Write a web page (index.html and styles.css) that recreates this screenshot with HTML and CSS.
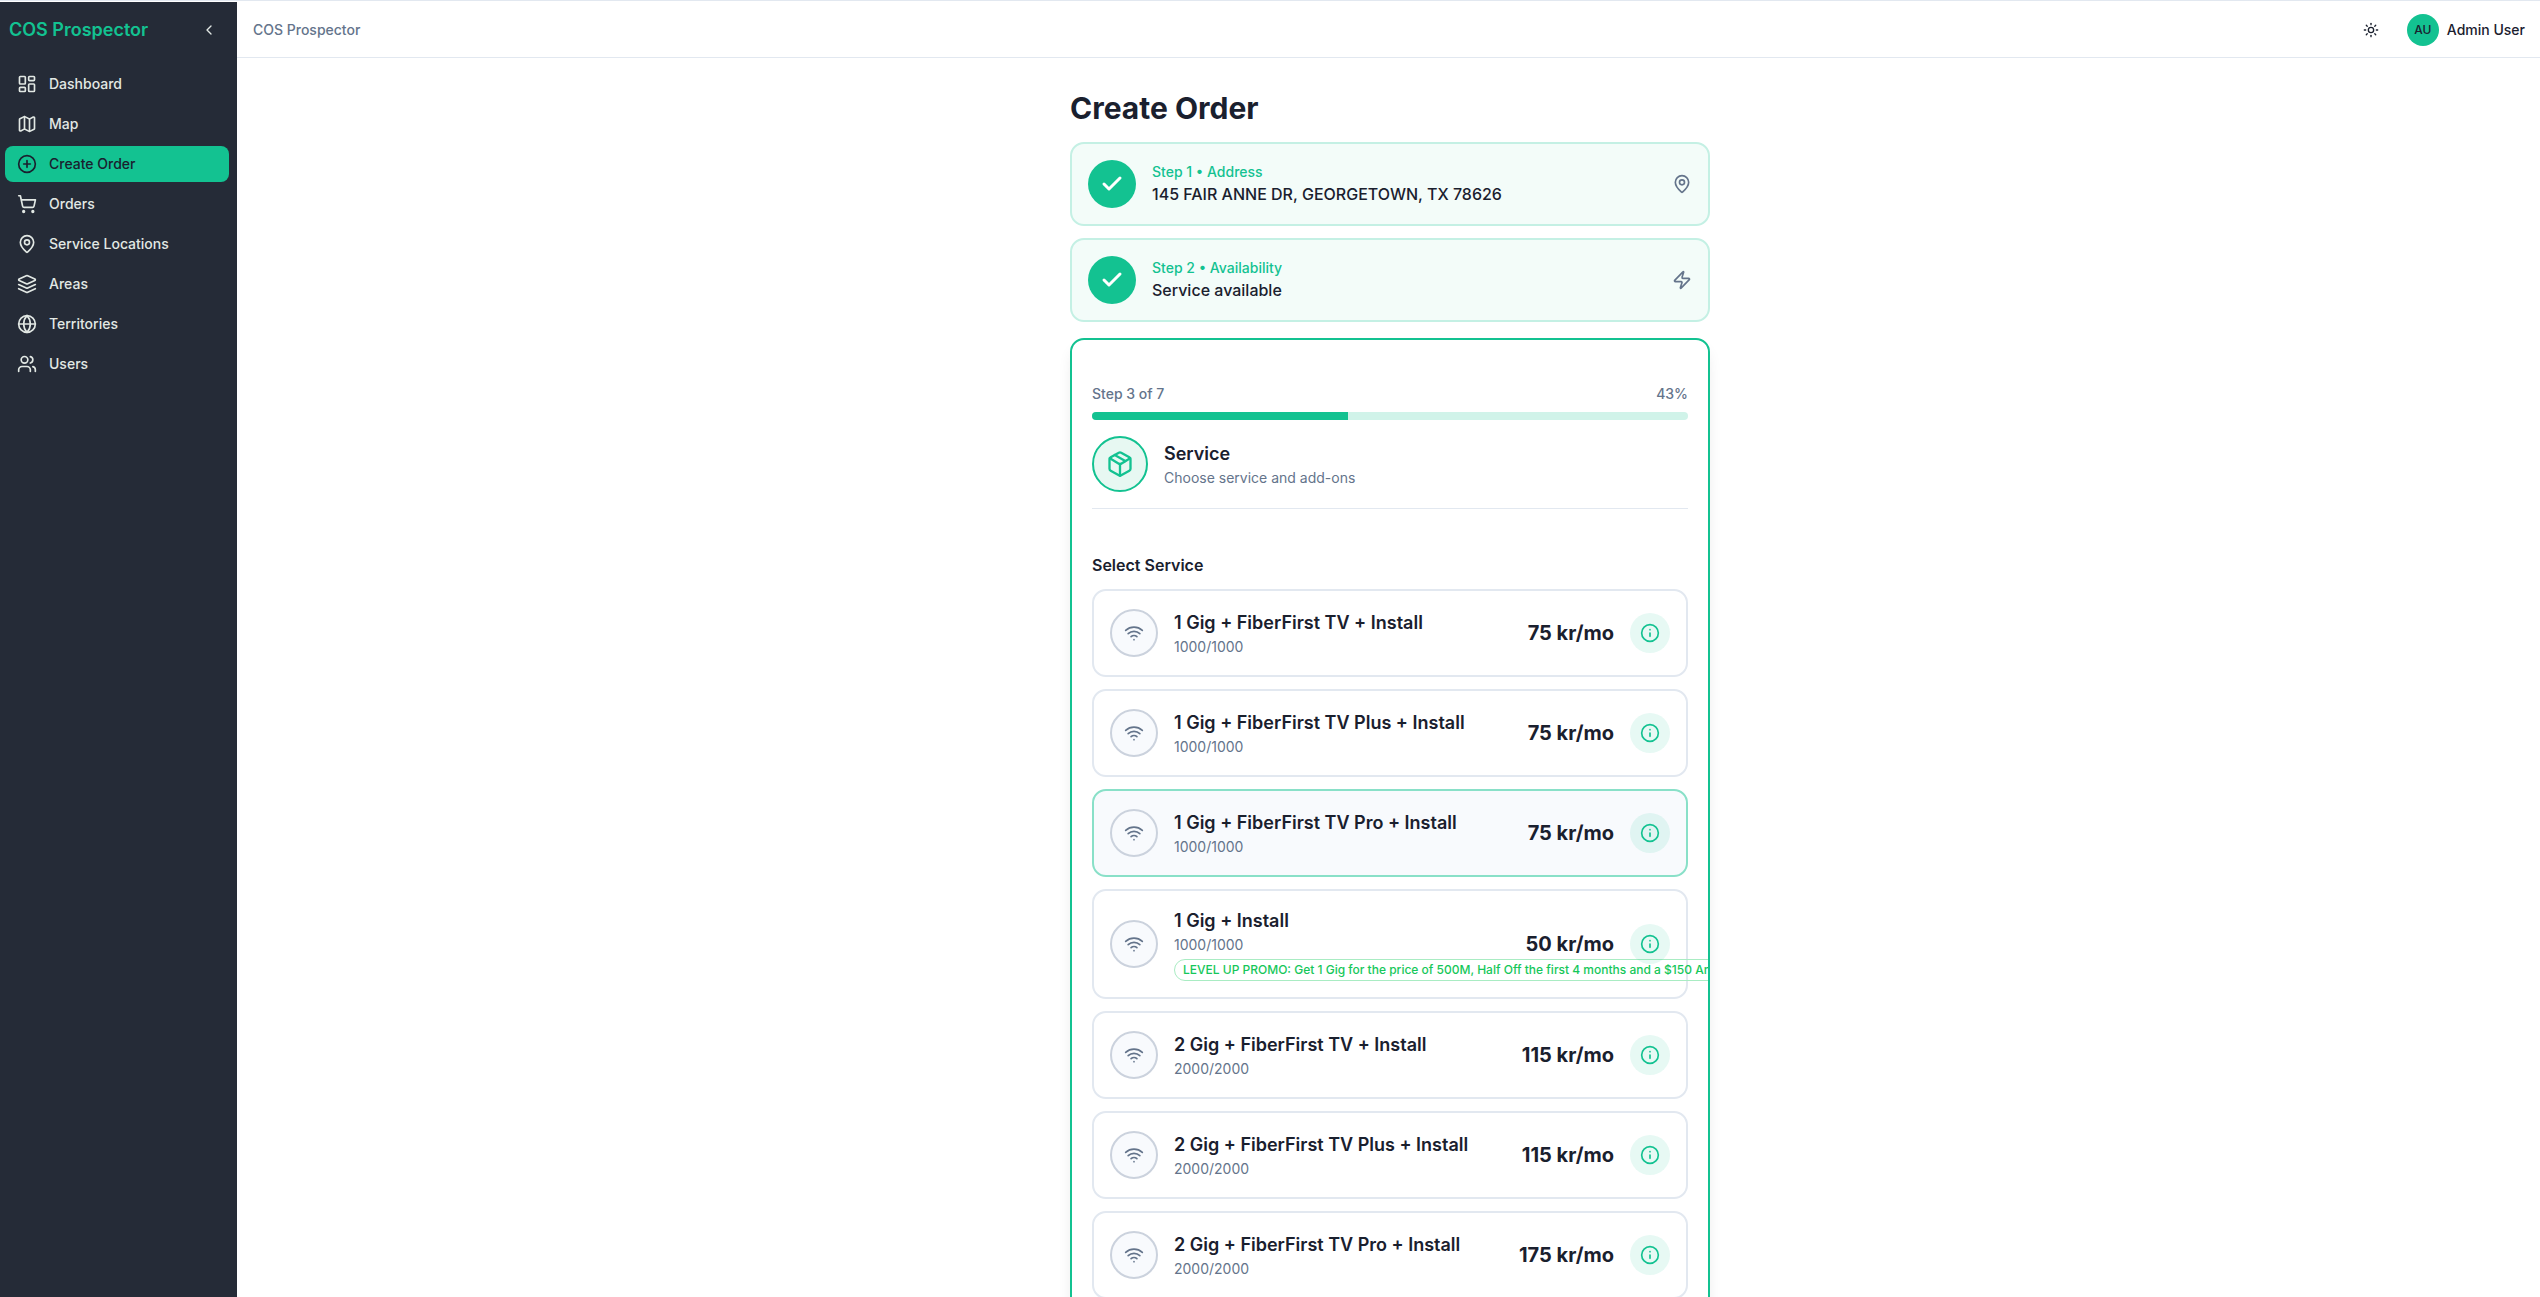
FILE: index.html
```
<!DOCTYPE html>
<html lang="en">
<head>
<meta charset="utf-8">
<meta name="viewport" content="width=device-width, initial-scale=1">
<title>COS Prospector - Create Order</title>
<link rel="stylesheet" href="styles.css">
</head>
<body>
<svg class="sprite" aria-hidden="true">
  <symbol id="wifi" viewBox="0 0 24 24"><path d="M12 20h.01"/><path d="M2 8.82a15 15 0 0 1 20 0"/><path d="M5 12.859a10 10 0 0 1 14 0"/><path d="M8.5 16.429a5 5 0 0 1 7 0"/></symbol>
  <symbol id="info" viewBox="0 0 24 24"><circle cx="12" cy="12" r="10"/><path d="M12 16v-4"/><path d="M12 8h.01"/></symbol>
  <symbol id="check" viewBox="0 0 24 24"><path d="M20 6 9 17l-5-5"/></symbol>
  <symbol id="pin" viewBox="0 0 24 24"><path d="M20 10c0 4.993-5.539 10.193-7.399 11.799a1 1 0 0 1-1.202 0C9.539 20.193 4 14.993 4 10a8 8 0 0 1 16 0"/><circle cx="12" cy="10" r="3"/></symbol>
</svg>
<div class="app">
  <aside class="sidebar">
    <div class="brand">
      <span class="brand-name">COS Prospector</span>
      <button class="icon-button" type="button" aria-label="Collapse sidebar"><svg class="icon icon-sm" viewBox="0 0 24 24"><path d="m15 18-6-6 6-6"/></svg></button>
    </div>
    <nav class="nav">
      <a class="nav-link" href="#dashboard"><svg class="icon" viewBox="0 0 24 24"><rect width="7" height="9" x="3" y="3" rx="1"/><rect width="7" height="5" x="14" y="3" rx="1"/><rect width="7" height="9" x="14" y="12" rx="1"/><rect width="7" height="5" x="3" y="16" rx="1"/></svg>Dashboard</a>
      <a class="nav-link" href="#map"><svg class="icon" viewBox="0 0 24 24"><path d="M14.106 5.553a2 2 0 0 0 1.788 0l3.659-1.83A1 1 0 0 1 21 4.619v12.764a1 1 0 0 1-.553.894l-4.553 2.277a2 2 0 0 1-1.788 0l-4.212-2.106a2 2 0 0 0-1.788 0l-3.659 1.83A1 1 0 0 1 3 19.381V6.618a1 1 0 0 1 .553-.894l4.553-2.277a2 2 0 0 1 1.788 0z"/><path d="M15 5.764v15"/><path d="M9 3.236v15"/></svg>Map</a>
      <a class="nav-link active" href="#create" aria-current="page"><svg class="icon" viewBox="0 0 24 24"><circle cx="12" cy="12" r="10"/><path d="M8 12h8"/><path d="M12 8v8"/></svg>Create Order</a>
      <a class="nav-link" href="#orders"><svg class="icon" viewBox="0 0 24 24"><circle cx="8" cy="21" r="1"/><circle cx="19" cy="21" r="1"/><path d="M2.05 2.05h2l2.66 12.42a2 2 0 0 0 2 1.58h9.78a2 2 0 0 0 1.95-1.57l1.65-7.43H5.12"/></svg>Orders</a>
      <a class="nav-link" href="#locations"><svg class="icon"><use href="#pin"/></svg>Service Locations</a>
      <a class="nav-link" href="#areas"><svg class="icon" viewBox="0 0 24 24"><path d="m12.83 2.18a2 2 0 0 0-1.66 0L2.6 6.08a1 1 0 0 0 0 1.83l8.58 3.91a2 2 0 0 0 1.66 0l8.58-3.9a1 1 0 0 0 0-1.83Z"/><path d="m22 17.65-9.17 4.16a2 2 0 0 1-1.66 0L2 17.65"/><path d="m22 12.65-9.17 4.16a2 2 0 0 1-1.66 0L2 12.65"/></svg>Areas</a>
      <a class="nav-link" href="#territories"><svg class="icon" viewBox="0 0 24 24"><circle cx="12" cy="12" r="10"/><path d="M12 2a14.5 14.5 0 0 0 0 20 14.5 14.5 0 0 0 0-20"/><path d="M2 12h20"/></svg>Territories</a>
      <a class="nav-link" href="#users"><svg class="icon" viewBox="0 0 24 24"><path d="M16 21v-2a4 4 0 0 0-4-4H6a4 4 0 0 0-4 4v2"/><circle cx="9" cy="7" r="4"/><path d="M22 21v-2a4 4 0 0 0-3-3.87"/><path d="M16 3.13a4 4 0 0 1 0 7.75"/></svg>Users</a>
    </nav>
  </aside>
  <div class="page">
    <header class="topbar">
      <a class="crumb" href="#home">COS Prospector</a>
      <div class="topbar-actions">
        <button class="icon-button" type="button" aria-label="Toggle theme"><svg class="icon icon-sm" viewBox="0 0 24 24"><circle cx="12" cy="12" r="4"/><path d="M12 2v2"/><path d="M12 20v2"/><path d="m4.93 4.93 1.41 1.41"/><path d="m17.66 17.66 1.41 1.41"/><path d="M2 12h2"/><path d="M20 12h2"/><path d="m6.34 17.66-1.41 1.41"/><path d="m19.07 4.93-1.41 1.41"/></svg></button>
        <button class="account" type="button"><span class="avatar">AU</span>Admin User</button>
      </div>
    </header>
    <main class="content">
      <div class="order">
        <h1>Create Order</h1>
        <div class="done-steps">
          <section class="done">
            <span class="done-mark"><svg class="icon icon-md"><use href="#check"/></svg></span>
            <div class="grow"><p class="done-label">Step 1 • Address</p><p class="done-value">145 FAIR ANNE DR, GEORGETOWN, TX 78626</p></div>
            <svg class="icon muted"><use href="#pin"/></svg>
          </section>
          <section class="done">
            <span class="done-mark"><svg class="icon icon-md"><use href="#check"/></svg></span>
            <div class="grow"><p class="done-label">Step 2 • Availability</p><p class="done-value">Service available</p></div>
            <svg class="icon muted" viewBox="0 0 24 24"><path d="M4 14a1 1 0 0 1-.78-1.63l9.9-10.2a.5.5 0 0 1 .86.46l-1.92 6.02A1 1 0 0 0 13 10h7a1 1 0 0 1 .78 1.63l-9.9 10.2a.5.5 0 0 1-.86-.46l1.92-6.02A1 1 0 0 0 11 14z"/></svg>
          </section>
        </div>
        <section class="current">
          <div class="step-head">
            <div class="progress-text"><span>Step 3 of 7</span><span>43%</span></div>
            <div class="progress" role="progressbar" aria-label="Order progress" aria-valuenow="43" aria-valuemin="0" aria-valuemax="100"><div class="progress-fill" style="width:43%"></div></div>
            <div class="step-title">
              <span class="step-icon"><svg class="icon icon-lg" viewBox="0 0 24 24"><path d="M11 21.73a2 2 0 0 0 2 0l7-4A2 2 0 0 0 21 16V8a2 2 0 0 0-1-1.73l-7-4a2 2 0 0 0-2 0l-7 4A2 2 0 0 0 3 8v8a2 2 0 0 0 1 1.73z"/><path d="M12 22V12"/><path d="m3.3 7 7.703 4.734a2 2 0 0 0 1.994 0L20.7 7"/><path d="m7.5 4.27 9 5.15"/></svg></span>
              <div><h2>Service</h2><p class="sub">Choose service and add-ons</p></div>
            </div>
          </div>
          <h3>Select Service</h3>
          <ul class="options">
            <li class="option"><span class="option-icon"><svg class="icon"><use href="#wifi"/></svg></span><div class="grow"><p class="name">1 Gig + FiberFirst TV + Install</p><p class="sub">1000/1000</p></div><span class="price">75 kr/mo</span><button class="info" type="button" aria-label="Details"><svg class="icon"><use href="#info"/></svg></button></li>
            <li class="option"><span class="option-icon"><svg class="icon"><use href="#wifi"/></svg></span><div class="grow"><p class="name">1 Gig + FiberFirst TV Plus + Install</p><p class="sub">1000/1000</p></div><span class="price">75 kr/mo</span><button class="info" type="button" aria-label="Details"><svg class="icon"><use href="#info"/></svg></button></li>
            <li class="option hovered"><span class="option-icon"><svg class="icon"><use href="#wifi"/></svg></span><div class="grow"><p class="name">1 Gig + FiberFirst TV Pro + Install</p><p class="sub">1000/1000</p></div><span class="price">75 kr/mo</span><button class="info" type="button" aria-label="Details"><svg class="icon"><use href="#info"/></svg></button></li>
            <li class="option"><span class="option-icon"><svg class="icon"><use href="#wifi"/></svg></span><div class="grow"><p class="name">1 Gig + Install</p><p class="sub">1000/1000</p><span class="promo">LEVEL UP PROMO: Get 1 Gig for the price of 500M, Half Off the first 4 months and a $150 Amazon</span></div><span class="price">50 kr/mo</span><button class="info" type="button" aria-label="Details"><svg class="icon"><use href="#info"/></svg></button></li>
            <li class="option"><span class="option-icon"><svg class="icon"><use href="#wifi"/></svg></span><div class="grow"><p class="name">2 Gig + FiberFirst TV + Install</p><p class="sub">2000/2000</p></div><span class="price">115 kr/mo</span><button class="info" type="button" aria-label="Details"><svg class="icon"><use href="#info"/></svg></button></li>
            <li class="option"><span class="option-icon"><svg class="icon"><use href="#wifi"/></svg></span><div class="grow"><p class="name">2 Gig + FiberFirst TV Plus + Install</p><p class="sub">2000/2000</p></div><span class="price">115 kr/mo</span><button class="info" type="button" aria-label="Details"><svg class="icon"><use href="#info"/></svg></button></li>
            <li class="option"><span class="option-icon"><svg class="icon"><use href="#wifi"/></svg></span><div class="grow"><p class="name">2 Gig + FiberFirst TV Pro + Install</p><p class="sub">2000/2000</p></div><span class="price">175 kr/mo</span><button class="info" type="button" aria-label="Details"><svg class="icon"><use href="#info"/></svg></button></li>
          </ul>
        </section>
      </div>
    </main>
  </div>
</div>
</body>
</html>
```
FILE: styles.css
```
:root {
  --green: #13c291;
  --ink: #1a202e;
  --muted: #64748b;
  --line: #e2e8f0;
  --dark: #252b37;
  --radius: 14px;
}
* { box-sizing: border-box; }
body {
  margin: 0;
  background: #fff;
  color: var(--ink);
  font: 500 14px/20px Inter, sans-serif;
}
h1, h2, h3, p, ul { margin: 0; padding: 0; }
button { padding: 0; border: 0; background: none; color: inherit; font: inherit; cursor: pointer; }
a { color: inherit; text-decoration: none; }
.sprite { position: absolute; width: 0; height: 0; }
.icon {
  flex: none;
  width: 20px;
  height: 20px;
  fill: none;
  stroke: currentColor;
  stroke-width: 2;
  stroke-linecap: round;
  stroke-linejoin: round;
}
.icon-sm { width: 16px; height: 16px; }
.icon-md { width: 24px; height: 24px; stroke-width: 3; }
.icon-lg { width: 28px; height: 28px; }
.muted { color: var(--muted); }
.grow { flex: 1; min-width: 0; }

.app {
  display: flex;
  height: 100vh;
  overflow: hidden;
  padding-top: 1px;
  border-top: 1px solid var(--line);
}
.sidebar { flex: none; width: 237px; background: var(--dark); color: #e2e8e4; }
.brand { display: flex; align-items: center; justify-content: space-between; height: 56px; padding: 0 16px 0 9px; }
.brand-name { color: var(--green); font-size: 18px; line-height: 28px; font-weight: 600; }
.icon-button { display: grid; place-items: center; width: 24px; height: 32px; }
.nav { display: flex; flex-direction: column; gap: 4px; padding: 8px 8px 8px 5px; }
.nav-link { display: flex; align-items: center; gap: 12px; height: 36px; padding: 0 12px; border-radius: 8px; }
.nav-link.active { background: var(--green); color: var(--ink); }

.page { flex: 1; min-width: 0; display: flex; flex-direction: column; }
.topbar {
  flex: none;
  display: flex;
  align-items: center;
  justify-content: space-between;
  height: 56px;
  padding: 0 15px 0 16px;
  border-bottom: 1px solid var(--line);
}
.crumb { color: var(--muted); }
.topbar-actions { display: flex; align-items: center; gap: 24px; }
.account { display: flex; align-items: center; gap: 8px; }
.avatar {
  display: grid;
  place-items: center;
  width: 32px;
  height: 32px;
  border-radius: 50%;
  background: var(--green);
  font-size: 12px;
}

.content { flex: 1; min-height: 0; overflow: hidden; padding: 32px 21px 32px 24px; }
.order { max-width: 640px; margin: 0 auto; }
h1 { margin-bottom: 16px; font-size: 30px; line-height: 36px; font-weight: 700; }
.done-steps { display: flex; flex-direction: column; gap: 12px; margin-bottom: 16px; }
.done {
  display: flex;
  align-items: center;
  gap: 16px;
  padding: 16px;
  border: 2px solid #c4f0e4;
  border-radius: var(--radius);
  background: #f3fcf9;
}
.done-mark {
  display: grid;
  place-items: center;
  width: 48px;
  height: 48px;
  border-radius: 50%;
  background: var(--green);
  color: #fff;
}
.done-label { color: var(--green); }
.done-value { font-size: 16px; line-height: 24px; }

.current {
  padding: 44px 20px;
  overflow: hidden;
  border: 2px solid var(--green);
  border-radius: var(--radius);
  box-shadow: 0 10px 15px -3px rgba(0, 0, 0, .1);
}
.step-head { margin-bottom: 44px; padding-bottom: 16px; border-bottom: 1px solid var(--line); }
.progress-text { display: flex; justify-content: space-between; color: var(--muted); }
.progress { height: 8px; margin: 8px 0 16px; overflow: hidden; border-radius: 4px; background: #d0f3e9; }
.progress-fill { height: 100%; background: var(--green); }
.step-title { display: flex; align-items: center; gap: 16px; }
.step-icon {
  display: grid;
  place-items: center;
  width: 56px;
  height: 56px;
  border: 2px solid var(--green);
  border-radius: 50%;
  background: #e7f8f2;
  color: var(--green);
}
h2, .name { font-size: 18px; line-height: 28px; font-weight: 600; }
.sub { color: var(--muted); font-weight: 400; }
h3 { margin-bottom: 12px; font-size: 16px; line-height: 24px; font-weight: 600; }
.options { display: flex; flex-direction: column; gap: 12px; list-style: none; }
.option {
  display: flex;
  align-items: center;
  gap: 16px;
  min-height: 88px;
  padding: 16px;
  border: 2px solid var(--line);
  border-radius: var(--radius);
}
.option.hovered { border-color: #89e0c8; background: #f8fafd; }
.option-icon {
  display: grid;
  place-items: center;
  width: 48px;
  height: 48px;
  border: 2px solid #cbd2dd;
  border-radius: 50%;
  background: #f8fafd;
  color: var(--muted);
}
.price { font-size: 20px; line-height: 28px; font-weight: 700; }
.info {
  display: grid;
  place-items: center;
  width: 40px;
  height: 40px;
  border-radius: 50%;
  background: rgba(19, 194, 145, .1);
  color: var(--green);
}
.promo {
  display: block;
  width: max-content;
  margin-top: 4px;
  padding: 2px 8px;
  border: 1px solid #a9ecc3;
  border-radius: 11px;
  color: #16c75a;
  font-size: 12px;
  line-height: 16px;
  white-space: nowrap;
}
```
